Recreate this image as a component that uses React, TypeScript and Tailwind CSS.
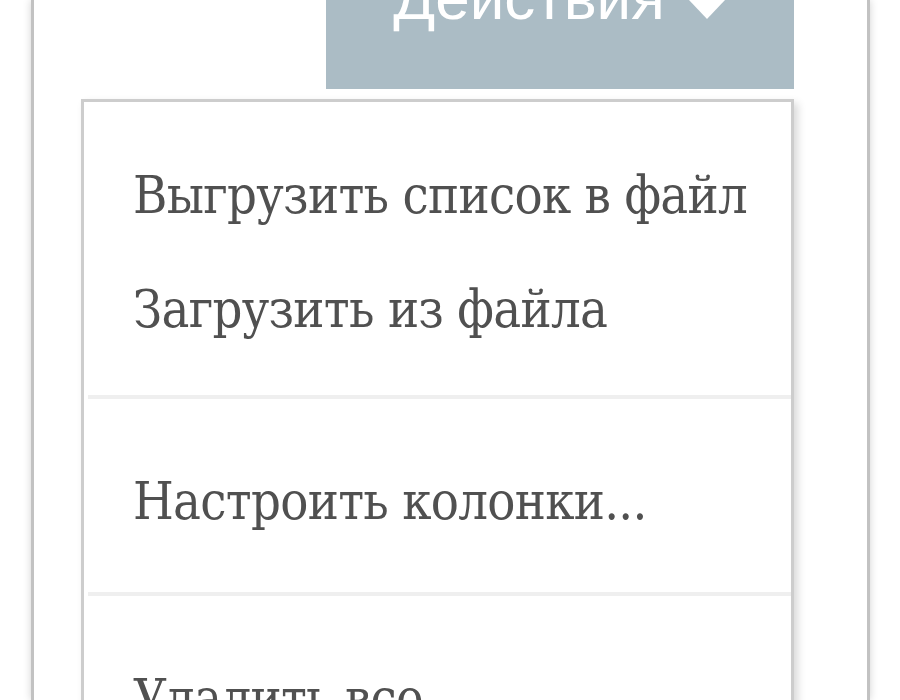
import React from 'react';

const menuGroups: string[][] = [
  ['Выгрузить список в файл', 'Загрузить из файла'],
  ['Настроить колонки...'],
  ['Удалить все'],
];

const groupPadding = ['pt-[36px] pb-[29px]', 'pt-[45px] pb-[34px]', 'pt-[45px] pb-[30px]'];

const App: React.FC = () => {
  return (
    <div className="h-[700px] w-[900px] overflow-hidden bg-white">
      {/* Panel frame */}
      <div className="ml-[31px] h-full w-[839px] border-x-[3px] border-[#c2c2c2] bg-white shadow-[0_0_8px_rgba(0,0,0,0.18)]">
        <div className="flex flex-col items-end pr-[73px]">
          {/* Actions button */}
          <button className="flex h-[89px] w-[468px] items-start justify-center gap-[22px] bg-[#abbcc5] text-white">
            <span className="-mt-[33px] font-['Liberation_Sans',Arial,sans-serif] text-[62px] leading-[62px]">
              Действия
            </span>
            <svg width="40" height="19" viewBox="0 0 40 19">
              <path d="M2 0 L38 0 L20 19 Z" fill="#ffffff" />
            </svg>
          </button>

          {/* Dropdown menu */}
          <div className="mt-[10px] w-[713px] border-[3px] border-[#cdcdcd] bg-white shadow-[4px_4px_8px_rgba(0,0,0,0.15)]">
            {menuGroups.map((group, gi) => (
              <div key={gi}>
                {gi > 0 && <div className="ml-[4px] h-[4px] bg-[#efefef]" />}
                <ul className={groupPadding[gi]}>
                  {group.map(item => (
                    <li
                      key={item}
                      className="flex h-[114px] items-center whitespace-nowrap pl-[49px] font-['DejaVu_Serif','Liberation_Serif',serif] text-[52px] font-stretch-condensed tracking-[-0.7px] text-[#505050]"
                    >
                      {item}
                    </li>
                  ))}
                </ul>
              </div>
            ))}
          </div>
        </div>
      </div>
    </div>
  );
};

export default App;
